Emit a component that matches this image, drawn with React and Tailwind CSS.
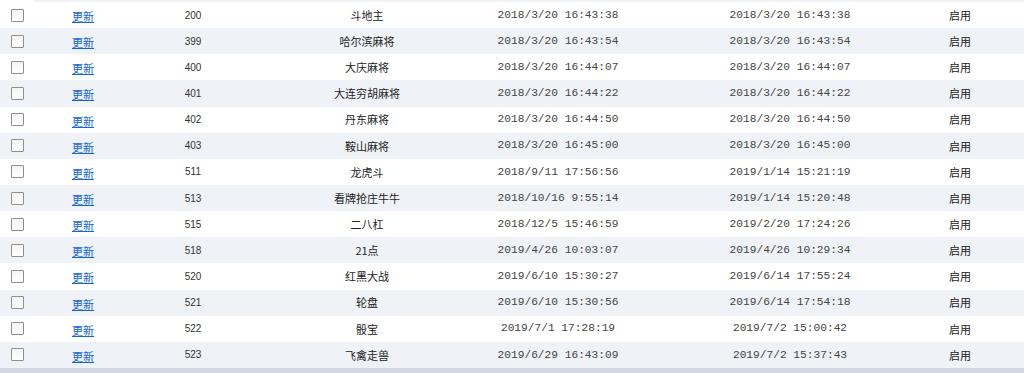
const rows = [
  ['200', '斗地主', '2018/3/20 16:43:38', '2018/3/20 16:43:38'],
  ['399', '哈尔滨麻将', '2018/3/20 16:43:54', '2018/3/20 16:43:54'],
  ['400', '大庆麻将', '2018/3/20 16:44:07', '2018/3/20 16:44:07'],
  ['401', '大连穷胡麻将', '2018/3/20 16:44:22', '2018/3/20 16:44:22'],
  ['402', '丹东麻将', '2018/3/20 16:44:50', '2018/3/20 16:44:50'],
  ['403', '鞍山麻将', '2018/3/20 16:45:00', '2018/3/20 16:45:00'],
  ['511', '龙虎斗', '2018/9/11 17:56:56', '2019/1/14 15:21:19'],
  ['513', '看牌抢庄牛牛', '2018/10/16 9:55:14', '2019/1/14 15:20:48'],
  ['515', '二八杠', '2018/12/5 15:46:59', '2019/2/20 17:24:26'],
  ['518', '21点', '2019/4/26 10:03:07', '2019/4/26 10:29:34'],
  ['520', '红黑大战', '2019/6/10 15:30:27', '2019/6/14 17:55:24'],
  ['521', '轮盘', '2019/6/10 15:30:56', '2019/6/14 17:54:18'],
  ['522', '骰宝', '2019/7/1 17:28:19', '2019/7/2 15:00:42'],
  ['523', '飞禽走兽', '2019/6/29 16:43:09', '2019/7/2 15:37:43'],
];

const mono = 'font-["Liberation_Mono","Noto_Sans_CJK_SC",monospace]';

export default function App() {
  return (
    <div className="w-[1024px] h-[373px] bg-white overflow-hidden flex flex-col text-[#333]">
      <div className="h-[2px] flex">
        <div className="w-[34px] bg-white" />
        <div className="flex-1 bg-[#eff2f7]" />
      </div>
      {rows.map(([id, name, created, updated], i) => (
        <div
          key={id}
          className={
            'h-[26.15px] grid grid-cols-[34px_98px_122px_226px_156px_308px_32px_1fr] items-center ' +
            (i % 2 === 1 ? 'bg-[#eff2f7]' : 'bg-white')
          }
        >
          <div className="flex justify-center">
            <span className="w-[13px] h-[13px] border border-[#8f8f8f] bg-gradient-to-b from-[#f4f4f4] to-white rounded-[1px]" />
          </div>
          <div className="text-center leading-none">
            <a href="#" className="text-[11px] text-[#1366d6] underline underline-offset-1 font-['Noto_Sans_CJK_SC',sans-serif]">
              更新
            </a>
          </div>
          <div className="text-center text-[10px] font-['Liberation_Sans',sans-serif] text-[#333]">{id}</div>
          <div className="text-center text-[11px] font-['Noto_Sans_CJK_SC',sans-serif] text-[#222]">{name}</div>
          <div className={'text-center text-[11.2px] whitespace-nowrap text-[#444] ' + mono}>{created}</div>
          <div className={'text-center text-[11.2px] whitespace-nowrap text-[#444] ' + mono}>{updated}</div>
          <div className="text-center text-[11px] whitespace-nowrap font-['Noto_Sans_CJK_SC',sans-serif] text-[#222]">启用</div>
          <div />
        </div>
      ))}
      <div className="flex-1 bg-[#d0d9e1]" />
    </div>
  );
}
